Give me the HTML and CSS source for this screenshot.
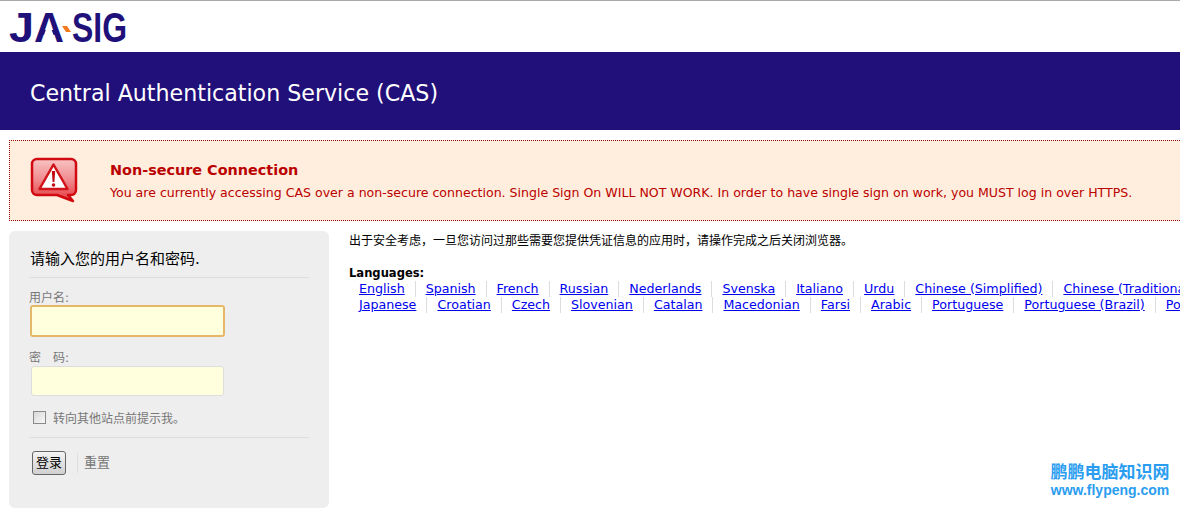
FILE: index.html
```html
<!DOCTYPE html>
<html lang="zh-CN">
<head>
  <meta charset="UTF-8" />
  <title>Central Authentication Service (CAS)</title>
  <link rel="stylesheet" href="styles.css">
</head>
<body>

  <div class="logo-bar">
    <svg class="logo" width="120" height="34" viewBox="0 0 120 34" role="img" aria-label="JA-SIG">
      <text x="0" y="32" class="logo-text" textLength="25" lengthAdjust="spacingAndGlyphs">J</text>
      <text x="25" y="32" class="logo-text" textLength="30" lengthAdjust="spacingAndGlyphs">A</text>
      <polygon points="37.500,18 42,18 44.500,25 35,25" fill="#fff"/>
      <polygon points="53,16 58,16 62,22 57,22" fill="#f47a20"/>
      <text x="63" y="32" class="logo-text" textLength="55" lengthAdjust="spacingAndGlyphs">SIG</text>
    </svg>
  </div>

  <header class="banner">
    <h1>Central Authentication Service (CAS)</h1>
  </header>

  <div class="errors">
    <svg class="warn-icon" width="48" height="48" viewBox="0 0 48 48" aria-hidden="true">
      <defs>
        <linearGradient id="bubble" x1="0" y1="0" x2="0" y2="1">
          <stop offset="0" stop-color="#f9c4c4"/>
          <stop offset="0.5" stop-color="#f08a8e"/>
          <stop offset="1" stop-color="#e53a40"/>
        </linearGradient>
      </defs>
      <path d="M7 2H41a5 5 0 0 1 5 5V33a5 5 0 0 1-5 5H38L43 44 27 38H7A5 5 0 0 1 2 33V7A5 5 0 0 1 7 2Z" fill="url(#bubble)" stroke="#d00a10" stroke-width="2.500" stroke-linejoin="round"/>
      <path d="M23.500 7.500 37.500 32H9.500Z" fill="#fff" stroke="#d0141a" stroke-width="2.500" stroke-linejoin="round"/>
      <path d="M21.800 14H25.200L24.400 25H22.600Z" fill="#c00c12"/>
      <circle cx="23.500" cy="28" r="1.800" fill="#c00c12"/>
    </svg>
    <div class="errors-text">
      <h2>Non-secure Connection</h2>
      <p>You are currently accessing CAS over a non-secure connection. Single Sign On WILL NOT WORK. In order to have single sign on work, you MUST log in over HTTPS.</p>
    </div>
  </div>

  <main class="content">
    <form class="login-box">
      <h3>请输入您的用户名和密码.</h3>
      <div class="field">
        <label for="username">用户名:</label>
        <input id="username" class="text-input focused" type="text">
      </div>
      <div class="field">
        <label for="password">密&emsp;码:</label>
        <input id="password" class="text-input" type="password">
      </div>
      <div class="warn-row">
        <span class="check"></span>
        <span>转向其他站点前提示我。</span>
      </div>
      <div class="actions">
        <span class="submit">登录</span>
        <span class="reset">重置</span>
      </div>
    </form>

    <div class="side">
      <p class="notice">出于安全考虑，一旦您访问过那些需要您提供凭证信息的应用时，请操作完成之后关闭浏览器。</p>
      <div class="languages">
        <strong>Languages:</strong>
        <ul>
          <li><a href="#">English</a></li>
          <li><a href="#">Spanish</a></li>
          <li><a href="#">French</a></li>
          <li><a href="#">Russian</a></li>
          <li><a href="#">Nederlands</a></li>
          <li><a href="#">Svenska</a></li>
          <li><a href="#">Italiano</a></li>
          <li><a href="#">Urdu</a></li>
          <li><a href="#">Chinese (Simplified)</a></li>
          <li><a href="#">Chinese (Traditional)</a></li>
        </ul>
        <ul>
          <li><a href="#">Japanese</a></li>
          <li><a href="#">Croatian</a></li>
          <li><a href="#">Czech</a></li>
          <li><a href="#">Slovenian</a></li>
          <li><a href="#">Catalan</a></li>
          <li><a href="#">Macedonian</a></li>
          <li><a href="#">Farsi</a></li>
          <li><a href="#">Arabic</a></li>
          <li><a href="#">Portuguese</a></li>
          <li><a href="#">Portuguese (Brazil)</a></li>
          <li><a href="#">Polish</a></li>
        </ul>
      </div>
    </div>
  </main>

  <div class="watermark">
    <div class="wm-name">鹏鹏电脑知识网</div>
    <div class="wm-url">www.flypeng.com</div>
  </div>

</body>
</html>
```

FILE: styles.css
```css
html, body {
  height: 510px;
  overflow: hidden;
}

body {
  font-family: Verdana, 'DejaVu Sans', 'Noto Sans CJK SC', sans-serif;
  font-size: 13px;
  margin: 0;
  padding: 0;
  background: #fff;
  color: #000;
  border-top: 1px solid #aaa;
}

.logo-bar {
  height: 51px;
  padding: 9px 0 0 9px;
  box-sizing: border-box;
}

.logo {
  display: block;
  overflow: visible;
}

.logo-text {
  font-family: 'Liberation Sans', sans-serif;
  font-size: 43px;
  font-weight: bold;
  fill: #20107a;
}

.banner {
  background: #210f7a;
  height: 78px;
  padding: 3px 30px 0;
  box-sizing: border-box;
  display: flex;
  align-items: center;
}

.banner h1 {
  margin: 0;
  color: #fff;
  font-size: 22.150px;
  font-weight: normal;
  white-space: nowrap;
}

/* Warning box runs off the right edge */
.errors {
  margin: 10px 0 10px 9px;
  height: 81px;
  box-sizing: border-box;
  background: #ffeedd;
  border: 1px dotted #990000;
  border-right: 0;
  display: flex;
  align-items: flex-start;
  color: #bb0000;
  white-space: nowrap;
}

.warn-icon {
  margin: 16px 0 0 20px;
  flex: none;
}

.errors-text {
  margin: 20px 0 0 32px;
}

.errors-text h2 {
  margin: 0 0 6px;
  font-size: 14.400px;
  line-height: 18px;
  font-weight: bold;
}

.errors-text p {
  margin: 0;
  font-size: 12.560px;
  line-height: 16px;
}

.content {
  display: flex;
  align-items: flex-start;
  padding-left: 9px;
}

.login-box {
  flex: none;
  width: 320px;
  height: 277px;
  box-sizing: border-box;
  background: #eeeeee;
  border-radius: 6px;
  padding: 18px 20px 0 20px;
  font-size: 12px;
  color: #777;
}

.login-box h3 {
  margin: 0 0 10px;
  padding: 0 0 7px 1px;
  border-bottom: 1px solid #ddd;
  font-size: 15px;
  line-height: 21px;
  font-weight: normal;
  color: #000;
}

.field {
  height: 60px;
}

.field label {
  display: block;
  line-height: 20px;
  height: 17px;
}

.text-input {
  display: block;
  width: 193px;
  height: 30px;
  margin: 1px 0 0 2px;
  padding: 0;
  box-sizing: border-box;
  background: #ffffdd;
  border: 1px solid #ddd;
  border-radius: 3px;
  outline: 0;
}

.text-input.focused {
  width: 195px;
  height: 32px;
  margin: 0 0 0 1px;
  border: 2px solid #e4b868;
}

.warn-row {
  display: flex;
  align-items: center;
  gap: 7px;
  height: 18px;
  margin: 0 0 11px 4px;
}

.check {
  width: 11px;
  height: 11px;
  border: 1px solid #8a8a8a;
  background: linear-gradient(135deg, #d8d8d8, #f8f8f8);
}

.actions {
  display: flex;
  align-items: center;
  border-top: 1px solid #ddd;
  padding: 13px 0 0 3px;
}

.submit {
  width: 34px;
  height: 24px;
  box-sizing: border-box;
  border: 1px solid #666;
  border-radius: 3px;
  background: linear-gradient(#f4f4f4, #d0d0d0);
  color: #000;
  font-size: 13px;
  line-height: 22px;
  text-align: center;
}

.reset {
  margin-left: 11px;
  padding-left: 6px;
  border-left: 1px solid #ddd;
  font-size: 13px;
  line-height: 20px;
}

.side {
  margin-left: 20px;
  flex: 1;
  min-width: 0;
  white-space: nowrap;
  overflow: hidden;
}

.notice {
  margin: 0;
  padding-top: 2px;
  font-size: 12px;
  line-height: 17px;
}

.languages {
  margin-top: 16px;
}

.languages strong {
  display: block;
  font-size: 11.550px;
  line-height: 15px;
}

.languages ul {
  display: flex;
  margin: 0;
  padding: 0;
  list-style: none;
  font-size: 12.650px;
  line-height: 16px;
}

.languages li {
  padding: 0 10px;
  border-left: 1px solid #ddd;
}

.languages li:first-child {
  border-left: 0;
}

.languages a {
  color: #0000ee;
}

/* Site stamp laid over the screenshot corner */
.watermark {
  position: absolute;
  left: 1050px;
  top: 460px;
  width: 120px;
  text-align: center;
  color: #2a9df0;
  font-weight: bold;
  white-space: nowrap;
}

.wm-name {
  font-family: 'Noto Sans CJK SC', sans-serif;
  font-size: 17px;
  line-height: 22px;
}

.wm-url {
  font-family: 'Liberation Sans', sans-serif;
  font-size: 14px;
  line-height: 16px;
}
```
